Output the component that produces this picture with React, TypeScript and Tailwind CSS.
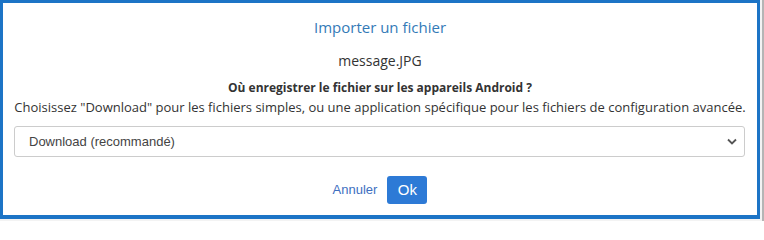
export default function App() {
  return (
    <div className="flex h-[221px] w-[764px] bg-[#f3f3f3]">
      <div className="flex h-[219px] w-[760px] flex-col items-center border-[3px] border-b-4 border-[#1c74c6] bg-white font-['Open_Sans',sans-serif]">
        <h1 className="mt-[14px] text-[15px] leading-[20px] text-[#337ab7]">Importer un fichier</h1>
        <p className="mt-[14px] text-[14px] leading-[20px] text-[#333]">message.JPG</p>
        <p className="mt-[8px] text-[12px] font-bold leading-[17px] text-[#333]">
          Où enregistrer le fichier sur les appareils Android ?
        </p>
        <p className="mt-[2px] text-[13px] leading-[18px] text-[#333]">
          Choisissez "Download" pour les fichiers simples, ou une application spécifique pour les fichiers de configuration avancée.
        </p>
        <div className="relative mt-[10px] ml-[11px] w-[731px] self-start">
          <select className="h-[31px] w-full appearance-none rounded-[3px] border border-[#ccc] bg-white pl-[14px] font-['Liberation_Sans',Arial,sans-serif] text-[13px] text-[#444] outline-none">
            <option>Download (recommandé)</option>
          </select>
          <svg className="pointer-events-none absolute right-[8px] top-[12px]" width="10" height="7" viewBox="0 0 10 7">
            <path d="M1 1.5 L5 5.5 L9 1.5" fill="none" stroke="#555" strokeWidth="1.8" />
          </svg>
        </div>
        <div className="mt-[19px] flex items-center gap-[10px]">
          <a className="font-['Liberation_Sans',Arial,sans-serif] text-[13px] text-[#3e6fbf]">Annuler</a>
          <button className="h-[28px] w-[40px] rounded-[3px] bg-[#2d7ad6] font-['Liberation_Sans',Arial,sans-serif] text-[15px] text-white">
            Ok
          </button>
        </div>
      </div>
      <div className="ml-[2px] h-[221px] w-[2px] bg-[#b5b5b5]" />
    </div>
  );
}
